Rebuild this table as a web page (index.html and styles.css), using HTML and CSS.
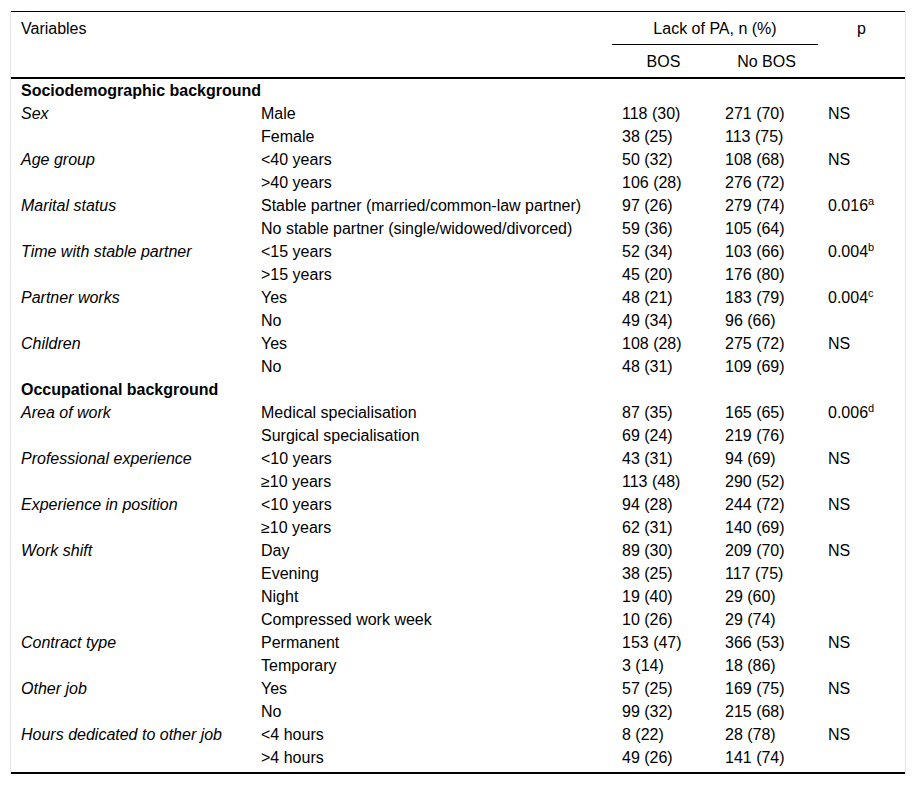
FILE: index.html
```html
<!DOCTYPE html>
<html lang="en">
<head>
<meta charset="utf-8">
<title>Lack of PA table</title>
<link rel="stylesheet" href="styles.css">
</head>
<body>
<div class="frame">
<table class="data">
<colgroup>
<col class="c1"><col class="c2"><col class="c3"><col class="c4"><col class="c5">
</colgroup>
<thead>
<tr>
<th rowspan="2" class="hl top">Variables</th>
<th rowspan="2" class="top"></th>
<th colspan="2" class="grp">Lack of PA, n (%)</th>
<th rowspan="2" class="top ctr">p</th>
</tr>
<tr>
<th class="ctr">BOS</th>
<th class="ctr">No BOS</th>
</tr>
</thead>
<tbody>
<tr><td colspan="5" class="sec">Sociodemographic background</td></tr>
<tr><td class="var">Sex</td><td>Male</td><td>118 (30)</td><td>271 (70)</td><td>NS</td></tr>
<tr><td></td><td>Female</td><td>38 (25)</td><td>113 (75)</td><td></td></tr>
<tr><td class="var">Age group</td><td>&lt;40 years</td><td>50 (32)</td><td>108 (68)</td><td>NS</td></tr>
<tr><td></td><td>&gt;40 years</td><td>106 (28)</td><td>276 (72)</td><td></td></tr>
<tr><td class="var">Marital status</td><td>Stable partner (married/common-law partner)</td><td>97 (26)</td><td>279 (74)</td><td>0.016<sup>a</sup></td></tr>
<tr><td></td><td>No stable partner (single/widowed/divorced)</td><td>59 (36)</td><td>105 (64)</td><td></td></tr>
<tr><td class="var">Time with stable partner</td><td>&lt;15 years</td><td>52 (34)</td><td>103 (66)</td><td>0.004<sup>b</sup></td></tr>
<tr><td></td><td>&gt;15 years</td><td>45 (20)</td><td>176 (80)</td><td></td></tr>
<tr><td class="var">Partner works</td><td>Yes</td><td>48 (21)</td><td>183 (79)</td><td>0.004<sup>c</sup></td></tr>
<tr><td></td><td>No</td><td>49 (34)</td><td>96 (66)</td><td></td></tr>
<tr><td class="var">Children</td><td>Yes</td><td>108 (28)</td><td>275 (72)</td><td>NS</td></tr>
<tr><td></td><td>No</td><td>48 (31)</td><td>109 (69)</td><td></td></tr>
<tr><td colspan="5" class="sec">Occupational background</td></tr>
<tr><td class="var">Area of work</td><td>Medical specialisation</td><td>87 (35)</td><td>165 (65)</td><td>0.006<sup>d</sup></td></tr>
<tr><td></td><td>Surgical specialisation</td><td>69 (24)</td><td>219 (76)</td><td></td></tr>
<tr><td class="var">Professional experience</td><td>&lt;10 years</td><td>43 (31)</td><td>94 (69)</td><td>NS</td></tr>
<tr><td></td><td>&ge;10 years</td><td>113 (48)</td><td>290 (52)</td><td></td></tr>
<tr><td class="var">Experience in position</td><td>&lt;10 years</td><td>94 (28)</td><td>244 (72)</td><td>NS</td></tr>
<tr><td></td><td>&ge;10 years</td><td>62 (31)</td><td>140 (69)</td><td></td></tr>
<tr><td class="var">Work shift</td><td>Day</td><td>89 (30)</td><td>209 (70)</td><td>NS</td></tr>
<tr><td></td><td>Evening</td><td>38 (25)</td><td>117 (75)</td><td></td></tr>
<tr><td></td><td>Night</td><td>19 (40)</td><td>29 (60)</td><td></td></tr>
<tr><td></td><td>Compressed work week</td><td>10 (26)</td><td>29 (74)</td><td></td></tr>
<tr><td class="var">Contract type</td><td>Permanent</td><td>153 (47)</td><td>366 (53)</td><td>NS</td></tr>
<tr><td></td><td>Temporary</td><td>3 (14)</td><td>18 (86)</td><td></td></tr>
<tr><td class="var">Other job</td><td>Yes</td><td>57 (25)</td><td>169 (75)</td><td>NS</td></tr>
<tr><td></td><td>No</td><td>99 (32)</td><td>215 (68)</td><td></td></tr>
<tr><td class="var">Hours dedicated to other job</td><td>&lt;4 hours</td><td>8 (22)</td><td>28 (78)</td><td>NS</td></tr>
<tr class="last"><td></td><td>&gt;4 hours</td><td>49 (26)</td><td>141 (74)</td><td></td></tr>
</tbody>
</table>
</div>
</body>
</html>
```
FILE: styles.css
```css
html, body {
  margin: 0;
  padding: 0;
  background: #fff;
}
body {
  font-family: "Liberation Sans", Arial, sans-serif;
  font-size: 16px;
  color: #000;
}
.frame {
  margin: 11px 10px 0 10px;
  border-left: 1px solid #e4e4e4;
  border-right: 1px solid #e4e4e4;
}
.data {
  width: 100%;
  table-layout: fixed;
  border-collapse: separate;
  border-spacing: 0;
  border-top: 1px solid #000;
  border-bottom: 2px solid #000;
}
.c1 { width: 240px; }
.c2 { width: 361px; }
.c3 { width: 103px; }
.c4 { width: 103px; }
.c5 { width: 87px; }
th {
  font-weight: normal;
  line-height: 17px;
  padding: 8px 10px 7px;
  text-align: left;
  vertical-align: top;
  white-space: nowrap;
}
thead tr:last-child th,
th.top {
  border-bottom: 2px solid #000;
}
th.grp {
  text-align: center;
  border-bottom: 1px solid #000;
}
th.ctr {
  text-align: center;
}
td {
  line-height: 17px;
  padding: 3px 10px;
  text-align: left;
  vertical-align: top;
  white-space: nowrap;
}
td.sec {
  font-weight: bold;
}
td.var {
  font-style: italic;
}
tr.last td {
  padding-bottom: 6px;
}
sup {
  font-size: 11px;
  line-height: 0;
  vertical-align: 6px;
}
```
